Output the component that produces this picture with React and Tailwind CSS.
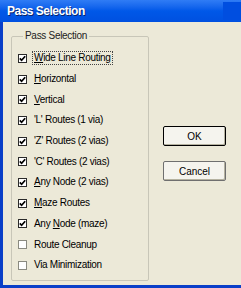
import React from 'react';

const passes = [
  { label: 'Wide Line Routing', key: 'W', checked: true, focus: true },
  { label: 'Horizontal', key: 'H', checked: true },
  { label: 'Vertical', key: 'V', checked: true },
  { label: "'L' Routes (1 via)", checked: true },
  { label: "'Z' Routes (2 vias)", checked: true },
  { label: "'C' Routes (2 vias)", checked: true },
  { label: 'Any Node (2 vias)', key: 'A', checked: true },
  { label: 'Maze Routes', key: 'M', checked: true },
  { label: 'Any Node (maze)', key: 'N', checked: true },
  { label: 'Route Cleanup', checked: false },
  { label: 'Via Minimization', checked: false },
];

const Label = ({ text, hotkey }) => {
  if (!hotkey) return text;
  const i = text.indexOf(hotkey);
  return (
    <>
      {text.slice(0, i)}
      <span className="underline underline-offset-1">{text[i]}</span>
      {text.slice(i + 1)}
    </>
  );
};

const CheckRow = ({ item }) => (
  <div className="flex h-[20.7px] items-center">
    <span
      className={`flex h-[9px] w-[9px] shrink-0 items-center justify-center border bg-white ${
        item.checked ? 'border-[#2a2a2a]' : 'border-[#8a8a80]'
      }`}
    >
      {item.checked && (
        <svg width="7" height="7" viewBox="0 0 7 7">
          <path d="M0.8 3.4 L2.6 5.3 L6.2 1.2" fill="none" stroke="#000" strokeWidth="1.7" />
        </svg>
      )}
    </span>
    <span
      className={`ml-[5px] text-[10px] leading-none tracking-[-0.3px] text-black ${
        item.focus ? 'border border-dotted border-[#444] px-[1px] py-[1px]' : 'px-[2px]'
      }`}
    >
      <Label text={item.label} hotkey={item.key} />
    </span>
  </div>
);

const App = () => {
  return (
    <div className="flex h-[288px] w-[241px] flex-col overflow-hidden bg-[#0a4fd8] font-['Liberation_Sans',Arial,sans-serif]">
      {/* Title bar */}
      <div className="relative flex h-[22px] shrink-0 items-center bg-gradient-to-b from-[#2f7cf5] via-[#0058e8] to-[#0050e0] pl-[7px]">
        <span className="text-[12px] font-bold tracking-[-0.5px] text-white [text-shadow:1px_1px_0_#0a246a]">
          Pass Selection
        </span>
        <div className="absolute right-0 top-[2px] h-[18px] w-[18px] bg-[#004ee0]" />
      </div>

      {/* Body */}
      <div className="flex flex-1 border-b-[3px] border-l-[3px] border-[#0a3fc8] bg-[#ece9d8]">
        <fieldset className="ml-[8px] mt-[9px] h-[250px] w-[138px] rounded-[2px] border border-[#c8c6b8] pl-[6px]">
          <legend className="ml-[5px] px-[2px] text-[10px] leading-none tracking-[-0.3px] text-[#222]">
            Pass Selection
          </legend>
          <div className="mt-[7px] flex flex-col">
            {passes.map((p) => (
              <CheckRow key={p.label} item={p} />
            ))}
          </div>
        </fieldset>

        <div className="ml-[14px] mt-[104px] flex flex-col gap-[15px]">
          <button className="h-[20px] w-[63px] rounded-[2px] border border-black bg-[#f5f4ee] text-[10px] text-black shadow-[inset_-1px_-1px_0_#b5b2a0]">
            OK
          </button>
          <button className="h-[20px] w-[63px] rounded-[2px] border border-[#6f6f6f] bg-[#f5f4ee] text-[10px] text-black shadow-[inset_-1px_-1px_0_#b5b2a0]">
            Cancel
          </button>
        </div>
      </div>
    </div>
  );
};

export default App;
